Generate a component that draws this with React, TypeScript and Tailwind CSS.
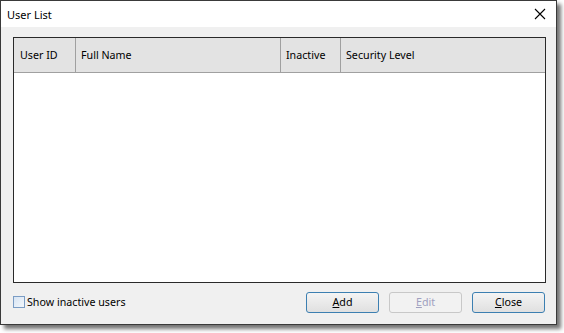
import React from "react";

export default function App() {
  const font = { fontFamily: '"Noto Sans", "Open Sans", sans-serif' };
  return (
    <div className="w-[564px] h-[333px] bg-white relative" style={font}>
      <div className="w-[557px] h-[325px] border border-[#3a3a3a] bg-[#f0f0f0] flex flex-col shadow-[4px_4px_4px_rgba(0,0,0,0.55)]">
        <div className="h-[26px] bg-white flex items-center justify-between pl-[6px] pr-[10px] shrink-0">
          <span className="text-[11px] text-black leading-none">User List</span>
          <svg width="12" height="12" viewBox="0 0 12 12">
            <path d="M1 1L11 11M11 1L1 11" stroke="#000" strokeWidth="1.1" />
          </svg>
        </div>
        <div className="flex-1 flex flex-col pl-[12px] pr-[10px] pt-[10px]">
          <div className="h-[246px] border border-[#2a2a2a] bg-white flex flex-col">
            <div className="h-[35px] flex bg-[#e3e3e3] border-b border-[#a0a0a0] text-[10.7px] text-black">
              <div className="w-[62px] border-r border-[#a0a0a0] flex items-center pl-[6px]">User ID</div>
              <div className="w-[205px] border-r border-[#a0a0a0] flex items-center pl-[5px]">Full Name</div>
              <div className="w-[60px] border-r border-[#a0a0a0] flex items-center pl-[5px]">Inactive</div>
              <div className="flex-1 flex items-center pl-[5px]">Security Level</div>
            </div>
          </div>
          <div className="flex items-center mt-[9px] text-[10.7px]">
            <div className="flex items-center gap-[2px]">
              <div className="w-[12px] h-[12px] border border-[#7a9cc4] bg-gradient-to-br from-[#d7e4f3] to-[#f3f7fb]"></div>
              <span className="text-black">Show inactive users</span>
            </div>
            <div className="ml-auto flex gap-[10px] mr-[1px]">
              <button className="w-[73px] h-[21px] rounded-[3px] border border-[#3c7fb1] bg-gradient-to-b from-[#f4f4f4] to-[#e0e0e0] text-black text-[10.7px] leading-none">
                <span className="underline">A</span>dd
              </button>
              <button className="w-[73px] h-[21px] rounded-[3px] border border-[#c8c8c8] bg-[#f2f2f2] text-[#a0a0c0] text-[10.7px] leading-none">
                <span className="underline">E</span>dit
              </button>
              <button className="w-[73px] h-[21px] rounded-[3px] border border-[#3c7fb1] bg-gradient-to-b from-[#f4f4f4] to-[#e0e0e0] text-black text-[10.7px] leading-none">
                <span className="underline">C</span>lose
              </button>
            </div>
          </div>
        </div>
      </div>
    </div>
  );
}
